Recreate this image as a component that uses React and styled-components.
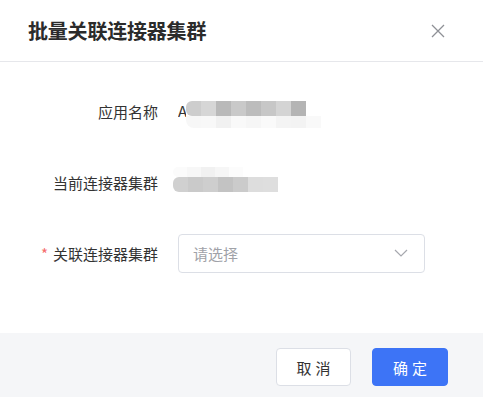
import React from 'react';
import styled, { createGlobalStyle } from 'styled-components';

const GlobalStyle = createGlobalStyle`
  html, body { margin: 0; padding: 0; }
  body {
    font-family: "Noto Sans CJK SC", "Noto Sans", "Liberation Sans", sans-serif;
    background: #fff;
  }
`;

const Dialog = styled.div`
  width: 483px;
  height: 397px;
  display: flex;
  flex-direction: column;
  background: #fff;
  overflow: hidden;
`;

const Header = styled.header`
  height: 61px;
  border-bottom: 1px solid #e6e7eb;
  display: flex;
  align-items: center;
  justify-content: space-between;
  padding: 0 37px 0 28px;
  box-sizing: content-box;
`;

const Title = styled.h2`
  margin: 0;
  font-size: 20px;
  font-weight: 700;
  color: #2b2b2b;
  letter-spacing: -0.2px;
`;

const Close = styled.button`
  border: 0;
  background: none;
  padding: 0;
  width: 16px;
  height: 16px;
  display: flex;
  cursor: pointer;
`;

const Body = styled.div`
  flex: 1;
  display: flex;
  flex-direction: column;
  gap: 31px;
  padding-top: 29px;
`;

const Row = styled.div`
  display: flex;
  align-items: center;
  height: 40px;
`;

const Label = styled.label`
  width: 158px;
  flex: 0 0 158px;
  text-align: right;
  font-size: 15px;
  color: #333;
  padding-right: 0;
`;

const Star = styled.span`
  color: #f56c6c;
  margin-right: 5px;
`;

const Value = styled.div`
  margin-left: ${p => p.$offset || 20}px;
  display: flex;
  align-items: flex-start;
  height: 40px;
  position: relative;
`;

const Letter = styled.span`
  font-size: 15px;
  color: #333;
  line-height: 40px;
  width: 8px;
  overflow: hidden;
`;

const Mosaic = styled.div`
  display: flex;
  flex-direction: column;
  padding-top: ${p => p.$top}px;
`;

const Strip = styled.div`
  display: flex;
  height: ${p => p.$h}px;
  border-radius: ${p => p.$round ? '0 0 0 8px' : '6px 0 0 6px'};
  overflow: hidden;
`;

const Block = styled.span`
  width: ${p => p.$w || 15}px;
  height: 100%;
  background: ${p => p.$c};
`;

const Select = styled.div`
  margin-left: 20px;
  width: 247px;
  height: 39px;
  box-sizing: border-box;
  border: 1px solid #dcdfe6;
  border-radius: 4px;
  display: flex;
  align-items: center;
  justify-content: space-between;
  padding: 0 16px 0 14px;
  font-size: 15px;
  color: #a0a2a8;
`;

const Footer = styled.footer`
  height: 64px;
  background: #f5f6f8;
  display: flex;
  justify-content: flex-end;
  align-items: flex-start;
  gap: 21px;
  padding: 15px 35px 0 0;
  box-sizing: border-box;
`;

const Button = styled.button`
  height: 38px;
  width: ${p => p.$w}px;
  border-radius: 4px;
  font-family: inherit;
  font-size: 15px;
  letter-spacing: 4px;
  padding: 0 0 0 4px;
  cursor: pointer;
  border: 1px solid ${p => p.$primary ? '#3d74f6' : '#dcdfe6'};
  background: ${p => p.$primary ? '#3d74f6' : '#fff'};
  color: ${p => p.$primary ? '#fff' : '#333'};
`;

const nameTop = ['#cdcdcd', '#d6d6d6', '#b9b9b9', '#c9c9c9', '#bcbcbc', '#c7c7c7', '#d4d4d4', '#b4b4b4'];
const nameBottom = ['#f7f7f7', '#f8f8f8', '#f1f1f1', '#f9f9f9', '#f6f6f6', '#fafafa', '#f4f4f4', '#f3f3f3', '#f9f9f9'];
const clusterTop = ['#fbfbfb', '#f7f7f7', '#f1f1f1', '#f6f6f6', '#fcfcfc'];
const clusterBottom = ['#d0d0d0', '#cacaca', '#cecece', '#c3c3c3', '#cbcbcb', '#dddddd', '#dedede'];

const CloseIcon = () => (
  <svg width="16" height="16" viewBox="0 0 16 16" fill="none" stroke="#8e9096" strokeWidth="1.3">
    <path d="M2 2 L14 14 M14 2 L2 14" />
  </svg>
);

const Chevron = () => (
  <svg width="14" height="8" viewBox="0 0 14 8" fill="none" stroke="#a6a8ae" strokeWidth="1.2">
    <path d="M1 1 L7 7 L13 1" />
  </svg>
);

export default function App() {
  return (
    <>
      <GlobalStyle />
      <Dialog>
        <Header>
          <Title>批量关联连接器集群</Title>
          <Close aria-label="close"><CloseIcon /></Close>
        </Header>
        <Body>
          <Row>
            <Label>应用名称</Label>
            <Value>
              <Letter>A</Letter>
              <Mosaic $top={10}>
                <Strip $h={15}>
                  {nameTop.map((c, i) => <Block key={i} $c={c} />)}
                </Strip>
                <Strip $h={12} $round>
                  {nameBottom.map((c, i) => <Block key={i} $c={c} />)}
                </Strip>
              </Mosaic>
            </Value>
          </Row>
          <Row>
            <Label>当前连接器集群</Label>
            <Value $offset={15}>
              <Mosaic $top={5}>
                <Strip $h={10}>
                  {clusterTop.map((c, i) => <Block key={i} $c={c} $w={14} />)}
                </Strip>
                <Strip $h={15}>
                  {clusterBottom.map((c, i) => <Block key={i} $c={c} />)}
                </Strip>
              </Mosaic>
            </Value>
          </Row>
          <Row>
            <Label><Star>*</Star>关联连接器集群</Label>
            <Select>
              <span>请选择</span>
              <Chevron />
            </Select>
          </Row>
        </Body>
        <Footer>
          <Button $w={75}>取消</Button>
          <Button $w={76} $primary>确定</Button>
        </Footer>
      </Dialog>
    </>
  );
}
